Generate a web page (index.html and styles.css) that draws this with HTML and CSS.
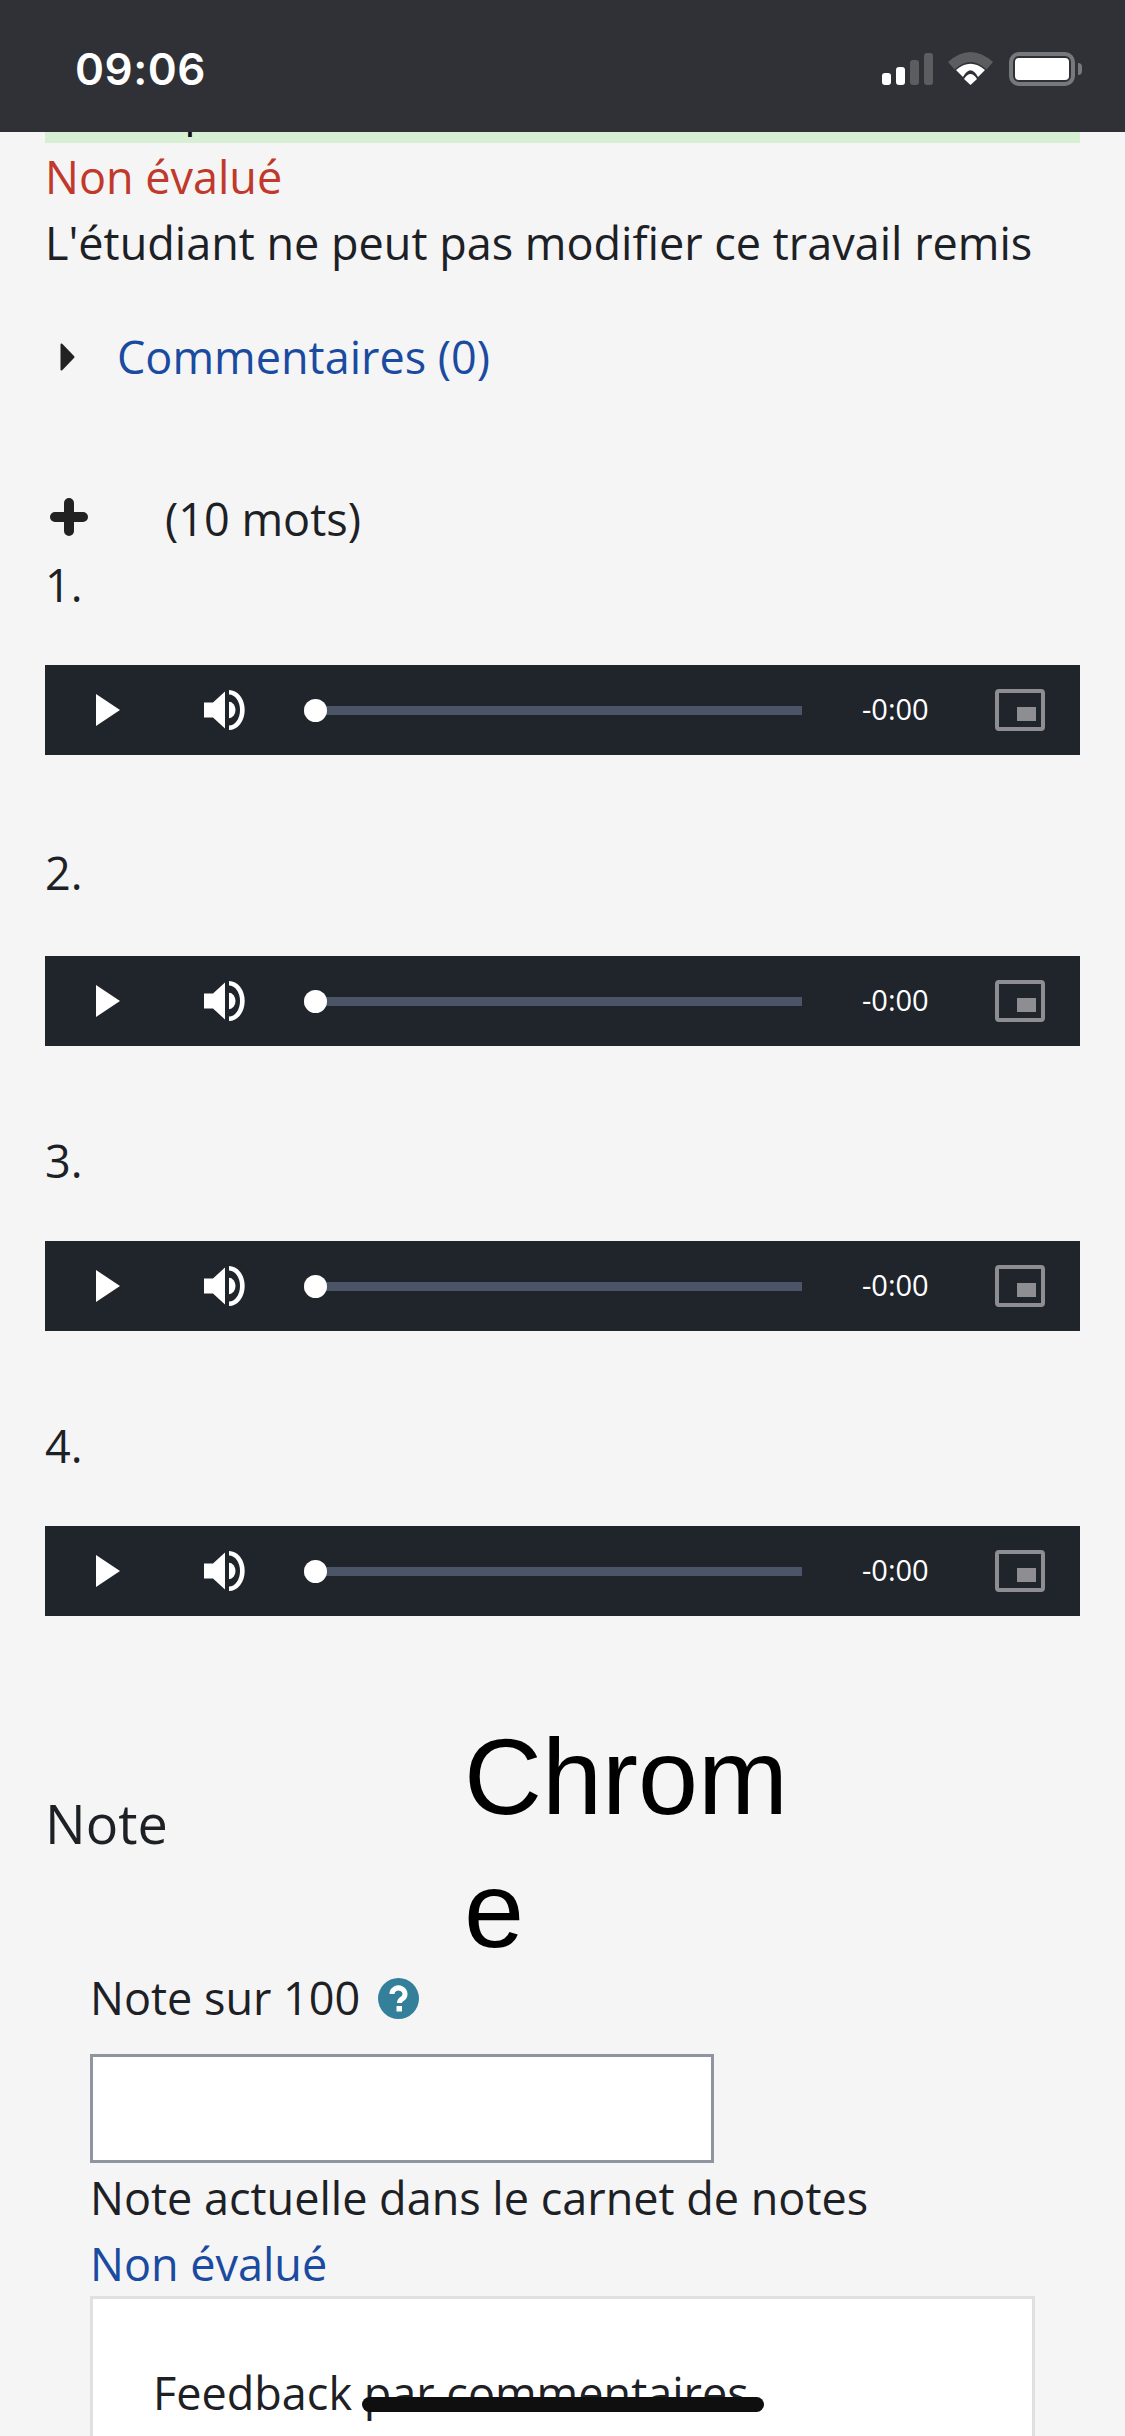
FILE: index.html
```html
<!DOCTYPE html>
<html lang="fr">
<head>
    <meta charset="UTF-8">
    <meta name="viewport" content="width=device-width, initial-scale=1.0">
    <title>Travail remis</title>
    <link rel="stylesheet" href="styles.css">
</head>
<body>
    <div class="screen">
        <div class="status-bar">
            <span class="clock">09:06</span>
            <div class="status-icons">
                <svg class="signal" width="51" height="32" viewBox="0 0 51 32">
                    <rect x="0" y="20" width="9" height="12" rx="3" fill="#fff"/>
                    <rect x="14" y="14" width="9" height="18" rx="3" fill="#fff"/>
                    <rect x="28" y="7" width="9" height="25" rx="3" fill="#5c5d60"/>
                    <rect x="42" y="0" width="9" height="32" rx="3" fill="#5c5d60"/>
                </svg>
                <svg class="wifi" width="45" height="33" viewBox="0 0 45 33">
                    <path d="M0 10 Q22.5 -10 45 10 L38.5 17.5 Q22.5 2.5 6.5 17.5 Z" fill="#5c5d60"/>
                    <path d="M8 18 Q22.5 5.4 37 18 L30 25 Q22.5 11.6 15 25 Z" fill="#fff"/>
                    <path d="M16 27 Q22.5 17 29 27 L22.5 33 Z" fill="#fff"/>
                </svg>
                <div class="battery">
                    <div class="battery-level"></div>
                </div>
            </div>
        </div>

        <div class="status-strip"><div class="status-strip-text">Remis pour évaluation</div></div>

        <div class="content">
            <div class="line text-danger">Non évalué</div>
            <div class="line">L'étudiant ne peut pas modifier ce travail remis</div>

            <div class="line comments">
                <svg class="caret" width="15" height="28" viewBox="0 0 15 28"><path d="M1.5 1.5 L13.5 14 L1.5 26.5 Z" fill="#222" stroke="#222" stroke-width="2" stroke-linejoin="round"/></svg>
                <a class="link">Commentaires (0)</a>
            </div>

            <div class="line words">
                <svg class="plus" width="38" height="38" viewBox="0 0 38 38"><path d="M14 5 a5 5 0 0 1 10 0 V14 H33 a5 5 0 0 1 0 10 H24 V33 a5 5 0 0 1 -10 0 V24 H5 a5 5 0 0 1 0 -10 H14 Z" fill="#222"/></svg>
                <span>(10 mots)</span>
            </div>

            <div class="audio-item first">
                <div class="line">1.</div>
                <div class="player">
                    <svg class="play" width="24" height="32" viewBox="0 0 24 32"><path d="M0 0 L24 16 L0 32 Z" fill="#fff"/></svg>
                    <svg class="speaker" width="41" height="40" viewBox="0 0 41 40">
                        <path d="M0 12.5 H9 L21 1.5 V38.5 L9 27.5 H0 Z" fill="#fff"/>
                        <path d="M25 11.7 A6.5 8.3 0 0 1 25 28.3 Z" fill="#fff"/>
                        <path d="M25 0 A15.7 20 0 0 1 25 40 V35.5 A11 15.5 0 0 0 25 4.5 Z" fill="#fff"/>
                    </svg>
                    <div class="track"><div class="thumb"></div></div>
                    <span class="time">-0:00</span>
                    <div class="pip"><div class="pip-inner"></div></div>
                </div>
            </div>

            <div class="audio-item wide">
                <div class="line">2.</div>
                <div class="player">
                    <svg class="play" width="24" height="32" viewBox="0 0 24 32"><path d="M0 0 L24 16 L0 32 Z" fill="#fff"/></svg>
                    <svg class="speaker" width="41" height="40" viewBox="0 0 41 40">
                        <path d="M0 12.5 H9 L21 1.5 V38.5 L9 27.5 H0 Z" fill="#fff"/>
                        <path d="M25 11.7 A6.5 8.3 0 0 1 25 28.3 Z" fill="#fff"/>
                        <path d="M25 0 A15.7 20 0 0 1 25 40 V35.5 A11 15.5 0 0 0 25 4.5 Z" fill="#fff"/>
                    </svg>
                    <div class="track"><div class="thumb"></div></div>
                    <span class="time">-0:00</span>
                    <div class="pip"><div class="pip-inner"></div></div>
                </div>
            </div>

            <div class="audio-item">
                <div class="line">3.</div>
                <div class="player">
                    <svg class="play" width="24" height="32" viewBox="0 0 24 32"><path d="M0 0 L24 16 L0 32 Z" fill="#fff"/></svg>
                    <svg class="speaker" width="41" height="40" viewBox="0 0 41 40">
                        <path d="M0 12.5 H9 L21 1.5 V38.5 L9 27.5 H0 Z" fill="#fff"/>
                        <path d="M25 11.7 A6.5 8.3 0 0 1 25 28.3 Z" fill="#fff"/>
                        <path d="M25 0 A15.7 20 0 0 1 25 40 V35.5 A11 15.5 0 0 0 25 4.5 Z" fill="#fff"/>
                    </svg>
                    <div class="track"><div class="thumb"></div></div>
                    <span class="time">-0:00</span>
                    <div class="pip"><div class="pip-inner"></div></div>
                </div>
            </div>

            <div class="audio-item">
                <div class="line">4.</div>
                <div class="player">
                    <svg class="play" width="24" height="32" viewBox="0 0 24 32"><path d="M0 0 L24 16 L0 32 Z" fill="#fff"/></svg>
                    <svg class="speaker" width="41" height="40" viewBox="0 0 41 40">
                        <path d="M0 12.5 H9 L21 1.5 V38.5 L9 27.5 H0 Z" fill="#fff"/>
                        <path d="M25 11.7 A6.5 8.3 0 0 1 25 28.3 Z" fill="#fff"/>
                        <path d="M25 0 A15.7 20 0 0 1 25 40 V35.5 A11 15.5 0 0 0 25 4.5 Z" fill="#fff"/>
                    </svg>
                    <div class="track"><div class="thumb"></div></div>
                    <span class="time">-0:00</span>
                    <div class="pip"><div class="pip-inner"></div></div>
                </div>
            </div>

            <div class="note-row">
                <div class="note-title">Note</div>
                <div class="chrome-text">Chrome</div>
            </div>

            <div class="grade-form">
                <div class="line grade-label">
                    <span>Note sur 100</span>
                    <svg class="help" width="41" height="41" viewBox="0 0 41 41">
                        <circle cx="20.5" cy="20.5" r="20.5" fill="#34809a"/>
                        <path d="M14 16 a6.5 6 0 1 1 10 5 q-2.5 1.5 -2.5 4" fill="none" stroke="#fff" stroke-width="5"/>
                        <rect x="18.5" y="28" width="5.5" height="5.5" fill="#fff"/>
                    </svg>
                </div>
                <input class="grade-input" type="text">
                <div class="line">Note actuelle dans le carnet de notes</div>
                <div class="line"><a class="link">Non évalué</a></div>
                <div class="feedback-box">
                    <div class="line">Feedback par commentaires</div>
                </div>
            </div>
        </div>

        <div class="home-indicator"></div>
    </div>
</body>
</html>
```

FILE: styles.css
```css
:root {
    --text-color: #1d2125;
    --link-color: #1a4ba0;
    --danger-color: #c0392b;
    --player-color: #20252c;
    --background-color: #f5f5f5;
}

* {
    margin: 0;
    padding: 0;
    box-sizing: border-box;
}

body {
    font-family: 'Open Sans', sans-serif;
    font-size: 45px;
    line-height: 66px;
    color: var(--text-color);
    background-color: var(--background-color);
}

.screen {
    position: relative;
    width: 1125px;
    height: 2436px;
    overflow: hidden;
}

.status-bar {
    display: flex;
    justify-content: space-between;
    height: 132px;
    padding: 52px 50px 0 75px;
    background-color: #303136;
}

.clock {
    font-family: 'Inter', sans-serif;
    font-size: 44px;
    font-weight: 600;
    line-height: 34px;
    letter-spacing: 0.5px;
    color: white;
}

.status-icons {
    display: flex;
    align-items: flex-start;
}

.signal {
    margin-top: 1px;
}

.wifi {
    margin-left: 15px;
}

.battery {
    position: relative;
    width: 66px;
    height: 34px;
    margin-left: 16px;
    padding: 2px;
    border: 4px solid #77787c;
    border-radius: 10px;
}

.battery::after {
    content: '';
    position: absolute;
    top: 7px;
    right: -11px;
    width: 4px;
    height: 12px;
    border-radius: 0 6px 6px 0;
    background-color: #77787c;
}

.battery-level {
    height: 22px;
    border-radius: 4px;
    background-color: white;
}

.status-strip {
    height: 11px;
    margin: 0 45px;
    overflow: hidden;
    background-color: #d7efd3;
}

.status-strip-text {
    margin-top: -56px;
    color: #111;
}

.content {
    padding: 1px 45px 0;
}

.text-danger {
    color: var(--danger-color);
}

.link {
    color: var(--link-color);
}

.comments {
    display: flex;
    align-items: center;
    margin-top: 48px;
    padding-left: 15px;
}

.caret {
    margin-right: 42px;
}

.words {
    display: flex;
    align-items: center;
    margin-top: 96px;
    padding-left: 5px;
}

.plus {
    margin-right: 77px;
    margin-bottom: 5px;
}

.audio-item {
    margin-top: 82px;
}

.audio-item.first {
    margin-top: 0;
}

.audio-item.wide {
    margin-top: 85px;
}

.player {
    display: flex;
    align-items: center;
    height: 90px;
    margin-top: 47px;
    padding: 0 35px 0 51px;
    background-color: var(--player-color);
}

.audio-item.wide .player {
    margin-top: 50px;
}

.speaker {
    margin-left: 84px;
}

.track {
    position: relative;
    width: 498px;
    height: 9px;
    margin-left: 59px;
    background-color: #4b5567;
}

.thumb {
    position: absolute;
    top: -7px;
    left: 0;
    width: 23px;
    height: 23px;
    border-radius: 50%;
    background-color: white;
}

.time {
    margin-left: 60px;
    margin-bottom: 2px;
    font-size: 29px;
    color: white;
}

.pip {
    position: relative;
    width: 50px;
    height: 42px;
    margin-left: auto;
    border: 4px solid #8e8e92;
    border-radius: 4px;
}

.pip-inner {
    position: absolute;
    right: 5px;
    bottom: 6px;
    width: 19px;
    height: 14px;
    background-color: #8e8e92;
}

.note-row {
    display: flex;
    align-items: flex-start;
    height: 252px;
    margin-top: 97px;
}

.note-title {
    width: 419px;
    margin-top: 77px;
    font-size: 54px;
}

.chrome-text {
    width: 340px;
    margin-top: -3px;
    font-family: 'Liberation Sans', sans-serif;
    font-size: 108px;
    line-height: 133px;
    color: black;
    word-break: break-all;
}

.grade-form {
    padding-left: 45px;
}

.grade-label {
    display: flex;
    align-items: center;
}

.help {
    margin-left: 18px;
}

.grade-input {
    display: block;
    width: 624px;
    height: 109px;
    margin-top: 23px;
    margin-bottom: 2px;
    border: 3px solid #8f959e;
    border-radius: 0;
    background-color: white;
}

.feedback-box {
    width: 945px;
    height: 300px;
    margin-top: -1px;
    padding: 61px 60px;
    border: 3px solid #e0e0e0;
    background-color: white;
}

.home-indicator {
    position: absolute;
    left: 362px;
    top: 2397px;
    width: 402px;
    height: 15px;
    border-radius: 8px;
    background-color: #0f0f0f;
}
```
